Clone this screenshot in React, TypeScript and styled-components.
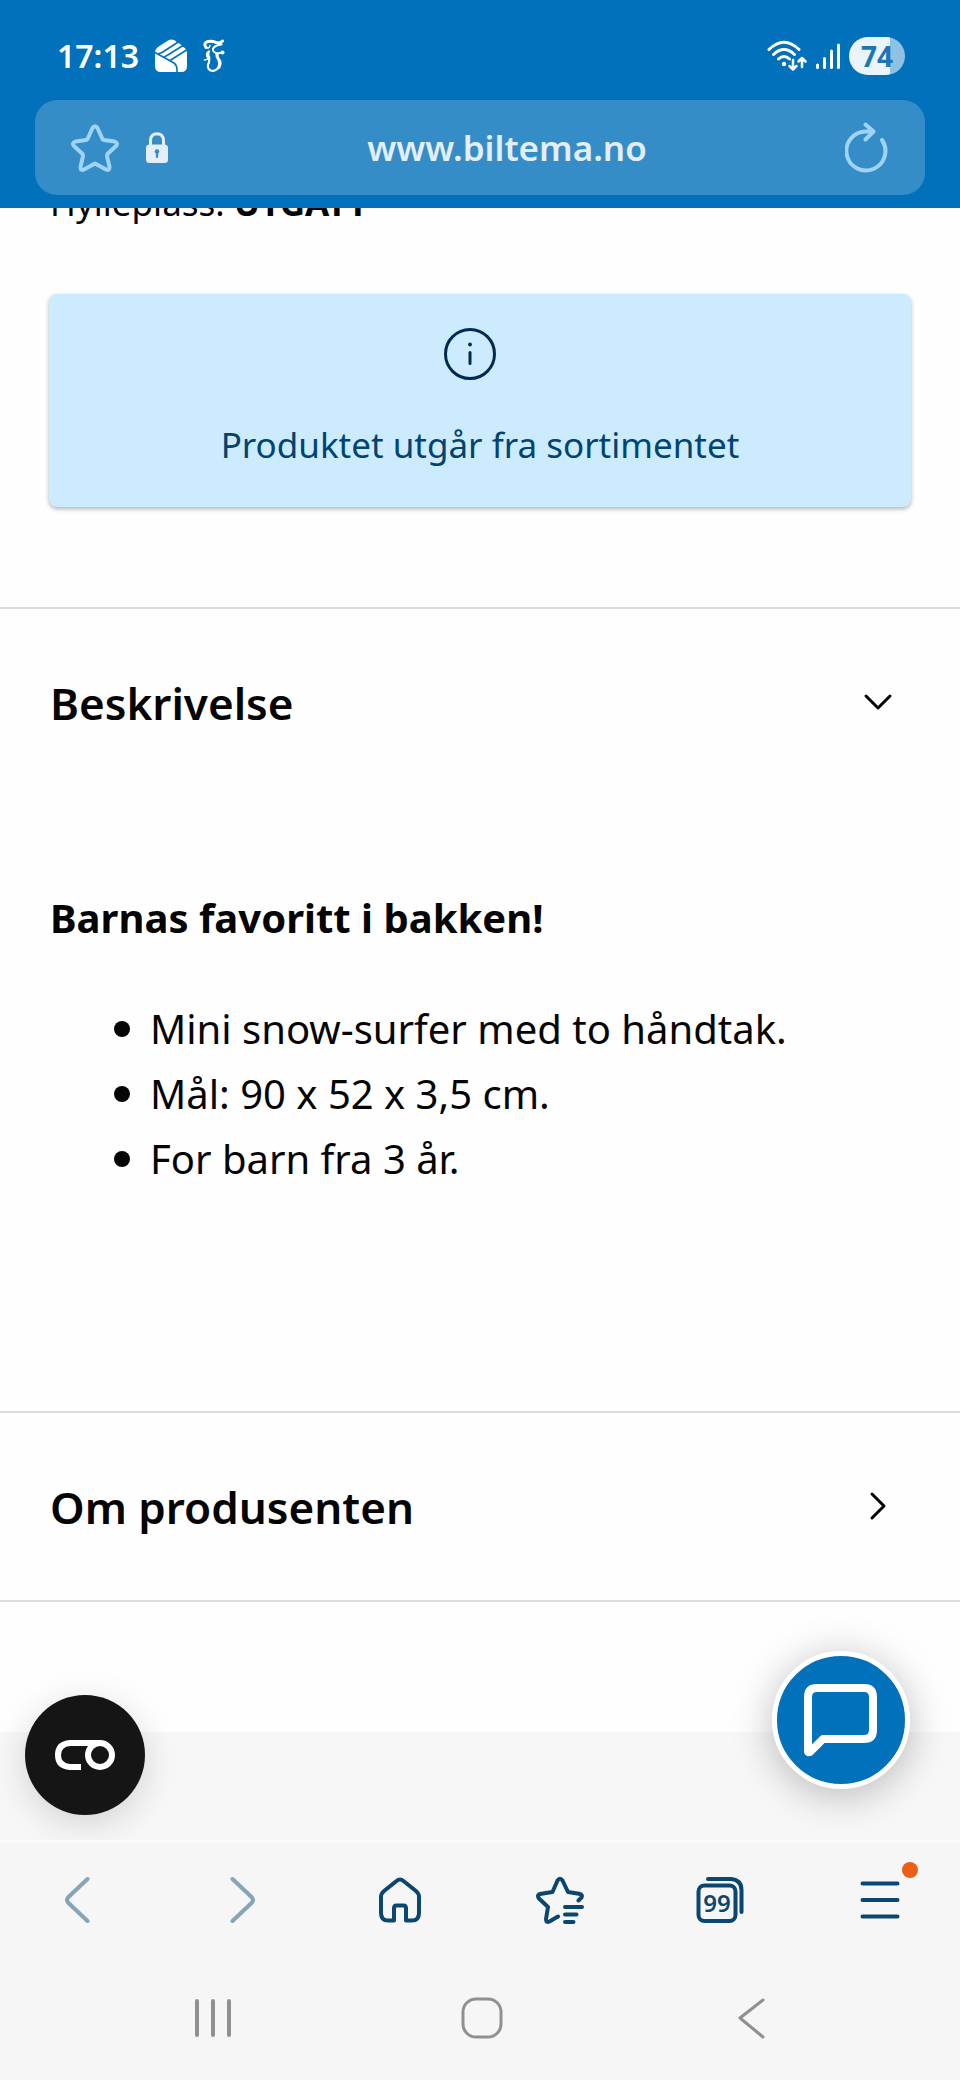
import React, { useState } from "react";
import styled, { createGlobalStyle } from "styled-components";

const color = {
  brand: "#0071ba",
  field: "#358dc7",
  fieldIcon: "#9fd3f7",
  fieldText: "#e3eef8",
  info: "#cdebff",
  infoText: "#00446f",
  nav: "#0b4670",
  navMuted: "#86a4b8",
  system: "#909090",
  line: "#dcdcdc",
};

const GlobalStyle = createGlobalStyle`
  *, *::before, *::after { box-sizing: border-box; }
  html, body { margin: 0; padding: 0; }
  body {
    font-family: "Noto Sans", "Open Sans", sans-serif;
    color: #050505;
    background: #fefefe;
  }
  button { font: inherit; color: inherit; border: 0; padding: 0; background: none; cursor: pointer; }
  svg { display: block; flex: none; }
`;

const Page = styled.div`
  display: flex;
  flex-direction: column;
  min-height: 100vh;
`;

const Header = styled.header`
  position: sticky;
  top: 0;
  z-index: 2;
  padding: 36px 35px 13px;
  background: ${color.brand};
`;

const StatusBar = styled.div`
  display: flex;
  justify-content: space-between;
  height: 40px;
  margin-bottom: 24px;
  padding: 0 20px 0 22px;
  color: #fff;
`;

const StatusGroup = styled.div<{ $gap: number }>`
  display: flex;
  align-items: center;
  gap: ${(p) => p.$gap}px;
`;

const Clock = styled.time`
  font-size: 32px;
  line-height: 40px;
  font-weight: 600;
`;

const Battery = styled.span`
  width: 56px;
  height: 38px;
  border-radius: 19px;
  background: linear-gradient(to right, #ecf4fb 74%, #8fc1e3 74%);
  color: #1a76b6;
  font-size: 28px;
  line-height: 38px;
  font-weight: 700;
  text-align: center;
`;

const AddressBar = styled.div`
  display: flex;
  align-items: center;
  height: 95px;
  padding: 0 36px;
  border-radius: 22px;
  background: ${color.field};
  color: ${color.fieldIcon};
`;

const SiteActions = styled.div`
  display: flex;
  align-items: center;
  gap: 26px;
`;

const Address = styled.a`
  flex: 1;
  color: ${color.fieldText};
  font-size: 35px;
  line-height: 48px;
  font-weight: 600;
  text-align: center;
  text-decoration: none;
`;

const Content = styled.main`
  background: #fefefe;
  padding-bottom: 130px;
`;

const ShelfRow = styled.div`
  display: flex;
  align-items: flex-end;
  height: 20px;
  margin-bottom: 66px;
  padding: 0 50px;
  overflow: hidden;
`;

const Shelf = styled.p`
  margin: 0;
  font-size: 35px;
  line-height: 50px;
`;

const InfoCard = styled.section`
  display: flex;
  flex-direction: column;
  align-items: center;
  gap: 36px;
  height: 213px;
  margin: 0 49px 100px;
  padding-top: 33px;
  border-radius: 8px;
  background: ${color.info};
  color: ${color.infoText};
  box-shadow: 0 2px 4px rgba(0, 0, 0, 0.3);

  svg { margin-right: 20px; }
`;

const InfoText = styled.p`
  margin: 0;
  font-size: 35px;
  line-height: 56px;
`;

const Section = styled.section`
  border-top: 2px solid ${color.line};

  &:last-child { border-bottom: 2px solid ${color.line}; }
`;

const SectionTitle = styled.span`
  font-size: 44px;
  line-height: 60px;
  font-weight: 600;
`;

const SectionHeading = styled.h2`
  margin: 0;
`;

const SectionToggle = styled.button`
  display: flex;
  align-items: center;
  justify-content: space-between;
  width: 100%;
  height: 187px;
  padding: 0 62px 0 50px;
  text-align: left;
`;

const Description = styled.div`
  padding: 92px 50px 220px;
`;

const Lead = styled.p`
  margin: 0 0 48px;
  font-size: 40px;
  line-height: 60px;
  font-weight: 700;
`;

const Facts = styled.ul`
  margin: 0;
  padding: 0 0 0 64px;
  list-style: none;
`;

const Fact = styled.li`
  display: flex;
  align-items: center;
  gap: 20px;
  font-size: 40px;
  line-height: 65px;

  &::before {
    content: "";
    width: 16px;
    height: 16px;
    border-radius: 50%;
    background: #050505;
  }
`;

const Footer = styled.footer`
  flex: 1;
  min-height: 108px;
  background: #f7f7f7;
`;

const Floating = styled.div`
  position: fixed;
  z-index: 1;
  right: 50px;
  bottom: 265px;
  left: 25px;
  display: flex;
  align-items: flex-end;
  justify-content: space-between;
  pointer-events: none;
`;

const FloatingButton = styled.button`
  display: flex;
  align-items: center;
  justify-content: center;
  border-radius: 50%;
  color: #fff;
  pointer-events: auto;
`;

const ConsentButton = styled(FloatingButton)`
  width: 120px;
  height: 120px;
  background: #151515;
  box-shadow: 0 8px 36px rgba(0, 0, 0, 0.15);
`;

const ChatButton = styled(FloatingButton)`
  width: 138px;
  height: 138px;
  margin-bottom: 26px;
  border: 5px solid #fff;
  background: ${color.brand};
  box-shadow: 0 6px 40px rgba(0, 0, 0, 0.26);
`;

const BottomBars = styled.div`
  position: sticky;
  bottom: 0;
  z-index: 2;
  height: 240px;
  border-top: 3px solid #fafafa;
  background: #f6f6f6;
`;

const BrowserNav = styled.nav`
  display: grid;
  grid-template-columns: repeat(6, 1fr);
  height: 114px;
  color: ${color.nav};
`;

const SystemNav = styled.nav`
  display: grid;
  grid-template-columns: repeat(3, 1fr);
  height: 122px;
  padding: 0 74px 0 78px;
  color: ${color.system};
`;

const BarButton = styled.button<{ $muted?: boolean }>`
  position: relative;
  display: flex;
  align-items: center;
  justify-content: center;
  color: ${(p) => (p.$muted ? color.navMuted : "inherit")};
`;

const NewDot = styled.span`
  position: absolute;
  top: 19px;
  right: 42px;
  width: 16px;
  height: 16px;
  border-radius: 50%;
  background: #ea5f16;
`;

const TabCount = styled.span`
  position: absolute;
  inset: 0;
  display: flex;
  align-items: center;
  justify-content: center;
  padding: 5px 6px 0 0;
  font-size: 24px;
  font-weight: 600;
`;

type IconProps = {
  w: number;
  h: number;
  stroke?: number;
  children: React.ReactNode;
};

const Icon = ({ w, h, stroke = 3, children }: IconProps) => (
  <svg
    width={w}
    height={h}
    viewBox={`0 0 ${w} ${h}`}
    fill="none"
    stroke="currentColor"
    strokeWidth={stroke}
    strokeLinecap="round"
    strokeLinejoin="round"
    aria-hidden="true"
  >
    {children}
  </svg>
);

const EnvelopeIcon = () => (
  <Icon w={32} h={34}>
    <path
      fill="currentColor"
      stroke="none"
      d="M0 14Q0 10 3 8L13 1.500Q16 0 19 1Q21.500 2 22 4Q26 4 27 7.500Q32 9 32 14V27Q32 33 26 33H6Q0 33 0 27Z"
    />
    <g stroke={color.brand} strokeWidth="1.600" strokeLinecap="butt">
      <path d="M3 15L7 13.500L22.500 3.500" />
      <path d="M9 18L12 16.500L28 6.500" />
      <path d="M15 21.500L32.500 10.500" />
      <path d="M0 13.500L19 24Q22.500 26.500 22 33.500" />
    </g>
  </Icon>
);

const FrakturIcon = () => (
  <Icon w={22} h={34}>
    <path d="M3 8.500Q0 4 5 2.500Q9 1.500 13 3.500Q17 5 19.500 2" strokeWidth="3" />
    <path d="M3 8.500Q6.500 10 7 6.500" strokeWidth="1.500" />
    <path d="M18.500 5.500Q11 6.500 10 10Q9.500 13 14 14.500L19 13.500" strokeWidth="2" />
    <path d="M6 12.500Q2.500 15 5 18.500Q7.500 21 5 25.500Q4 31 9.500 32Q14 31.500 16.500 27" strokeWidth="2.200" />
    <path d="M14 15Q13.500 18 16 21Q18 24 16 28" strokeWidth="3.200" />
    <path d="M5 14.500Q4.500 16.500 6 19" strokeWidth="3" />
    <path d="M1.500 21L5 20" strokeWidth="1.500" />
    <circle cx="19.500" cy="13.500" r="2" fill="currentColor" stroke="none" />
  </Icon>
);

const WifiIcon = () => (
  <Icon w={40} h={32} stroke={3}>
    <path d="M2 9.500Q17-5 32 9.500M6.500 14.500Q17 4.500 27.500 14.500M11.500 19Q17 14 22.500 19" />
    <circle cx="17" cy="24" r="2.200" fill="currentColor" stroke="none" />
    <path d="M26 20V29M22.500 26L26 29.500L29.500 26M35 27V18.500M31.500 21.500L35 18L38.500 21.500" strokeWidth="2.500" />
  </Icon>
);

const SignalIcon = () => (
  <Icon w={26} h={30} stroke={3}>
    <path d="M2.500 24V26.500M9.500 17.500V26.500M16.500 10V26.500M23.500 4V26.500" />
  </Icon>
);

const StarIcon = () => (
  <Icon w={48} h={48} stroke={4}>
    <path d="M21.500 4Q24 0.500 26.500 4L31 14Q31.500 15.500 33 16L43.500 17.500Q47.500 19 45 22L36.500 30Q36 31 36 32L38.500 43Q38.500 47 35 45.500L24 39.500L13 45.500Q9.500 47 9.500 43L12 32Q12 31 11.500 30L3 22Q0.500 19 4.500 17.500L15 16Q16.500 15.500 17 14Z" />
  </Icon>
);

const LockIcon = () => (
  <Icon w={24} h={32} stroke={3}>
    <g color={color.fieldText}>
      <path d="M5.500 14V8Q6 2 12 1.800Q18 2 18.500 8V14" stroke="currentColor" />
      <rect x="1" y="12.500" width="22" height="18.500" rx="3.500" fill="currentColor" stroke="none" />
    </g>
    <circle cx="12" cy="19.500" r="2.300" fill={color.field} stroke="none" />
    <path d="M12 19.500V25" stroke={color.field} strokeWidth="2.200" />
  </Icon>
);

const ReloadIcon = () => (
  <Icon w={44} h={52} stroke={4}>
    <path d="M37 18A19.500 19.500 0 1 1 21 9.500H28M20.500 2.500L28.500 9.500L20.500 17.500" />
  </Icon>
);

const InfoIcon = () => (
  <Icon w={54} h={54} stroke={3}>
    <circle cx="27" cy="27" r="24.500" stroke="#002b4c" />
    <path d="M27 25.500V36.500" stroke="#002b4c" />
    <circle cx="27" cy="17.500" r="1.900" fill="#002b4c" stroke="none" />
  </Icon>
);

const ChevronDown = () => (
  <Icon w={40} h={40}>
    <path d="M8 13L20 25L32 13" />
  </Icon>
);

const ChevronRight = () => (
  <Icon w={40} h={40}>
    <path d="M14 7L26 19L14 31" />
  </Icon>
);

const ConsentIcon = () => (
  <Icon w={62} h={32} stroke={6}>
    <path d="M27 28H16Q4 27 4 16Q4 5 16 4H46" strokeLinecap="butt" />
    <circle cx="46" cy="16" r="12" />
  </Icon>
);

const ChatIcon = () => (
  <Icon w={76} h={76} stroke={8}>
    <path d="M5 69V15Q5 6 14 6H61Q70 6 70 15V48Q70 57 61 57H20L7 70Q5 71 5 69Z" />
  </Icon>
);

const BackIcon = () => (
  <Icon w={32} h={48} stroke={4}>
    <path d="M23.500 3L4 21.500Q2 24 4 26.500L23.500 45" />
  </Icon>
);

const ForwardIcon = () => (
  <Icon w={32} h={48} stroke={4}>
    <path d="M8.500 3L28 21.500Q30 24 28 26.500L8.500 45" />
  </Icon>
);

const HomeIcon = () => (
  <Icon w={44} h={46} stroke={4}>
    <path d="M18.500 4Q22 1 25.500 4L38 14Q41 16.500 41 20V36Q41 43.500 34 43.500H28V31.500Q28 28.500 25.500 28.500H18.500Q16 28.500 16 31.500V43.500H10Q3 43.500 3 36V20Q3 16.500 6 14Z" />
  </Icon>
);

const BookmarksIcon = () => (
  <Icon w={50} h={48} stroke={4}>
    <path d="M43.500 24.500L46.500 21.500Q48 18.500 44 17.800L33 16L27.500 4.500Q25 1 22.500 4.500L17.500 16L5 18Q1.500 19 4 22.500L13 31L11 43Q11 47 14.500 45.500L23 40.500" />
    <path d="M30 31H47M30 38.500H41.500M30 46H38.500" />
  </Icon>
);

const TabsIcon = () => (
  <Icon w={50} h={48} stroke={4}>
    <rect x="3.500" y="9.500" width="37" height="35.500" rx="6" />
    <path d="M13 3H36Q46.500 4 46.500 14V36" />
  </Icon>
);

const MenuIcon = () => (
  <Icon w={40} h={40} stroke={4}>
    <path d="M2.500 3.500H37.500M2.500 20H37.500M2.500 36.500H37.500" />
  </Icon>
);

const RecentsIcon = () => (
  <Icon w={38} h={38} stroke={4}>
    <path d="M3 2V36M19 2V36M35 2V36" />
  </Icon>
);

const SystemHomeIcon = () => (
  <Icon w={42} h={42}>
    <rect x="2" y="2" width="38" height="38" rx="13" />
  </Icon>
);

const SystemBackIcon = () => (
  <Icon w={28} h={42}>
    <path d="M26 3L3 21L26 40" />
  </Icon>
);

type AccordionProps = {
  title: string;
  initiallyOpen?: boolean;
  children?: React.ReactNode;
};

const Accordion = ({ title, initiallyOpen = false, children }: AccordionProps) => {
  const [open, setOpen] = useState(initiallyOpen);
  return (
    <Section>
      <SectionHeading>
        <SectionToggle aria-expanded={open} onClick={() => setOpen(!open)}>
          <SectionTitle>{title}</SectionTitle>
          {open ? <ChevronDown /> : <ChevronRight />}
        </SectionToggle>
      </SectionHeading>
      {open && children}
    </Section>
  );
};

const facts = ["Mini snow-surfer med to håndtak.", "Mål: 90 x 52 x 3,5 cm.", "For barn fra 3 år."];

export default function App() {
  return (
    <Page>
      <GlobalStyle />
      <Header>
        <StatusBar>
          <StatusGroup $gap={16}>
            <Clock>17:13</Clock>
            <EnvelopeIcon />
            <FrakturIcon />
          </StatusGroup>
          <StatusGroup $gap={8}>
            <WifiIcon />
            <SignalIcon />
            <Battery>74</Battery>
          </StatusGroup>
        </StatusBar>
        <AddressBar>
          <SiteActions>
            <button aria-label="Bokmerk"><StarIcon /></button>
            <LockIcon />
          </SiteActions>
          <Address href="#">www.biltema.no</Address>
          <button aria-label="Last inn på nytt"><ReloadIcon /></button>
        </AddressBar>
      </Header>

      <Content>
        <ShelfRow>
          <Shelf>Hylleplass: <b>UTGÅTT</b></Shelf>
        </ShelfRow>
        <InfoCard>
          <InfoIcon />
          <InfoText>Produktet utgår fra sortimentet</InfoText>
        </InfoCard>
        <div>
          <Accordion title="Beskrivelse" initiallyOpen>
            <Description>
              <Lead>Barnas favoritt i bakken!</Lead>
              <Facts>
                {facts.map((fact) => (
                  <Fact key={fact}>{fact}</Fact>
                ))}
              </Facts>
            </Description>
          </Accordion>
          <Accordion title="Om produsenten" />
        </div>
      </Content>
      <Footer />

      <Floating>
        <ConsentButton aria-label="Samtykke"><ConsentIcon /></ConsentButton>
        <ChatButton aria-label="Chat"><ChatIcon /></ChatButton>
      </Floating>

      <BottomBars>
        <BrowserNav aria-label="Nettleser">
          <BarButton $muted aria-label="Tilbake"><BackIcon /></BarButton>
          <BarButton $muted aria-label="Frem"><ForwardIcon /></BarButton>
          <BarButton aria-label="Hjem"><HomeIcon /></BarButton>
          <BarButton aria-label="Bokmerker"><BookmarksIcon /></BarButton>
          <BarButton aria-label="Faner">
            <TabsIcon />
            <TabCount>99</TabCount>
          </BarButton>
          <BarButton aria-label="Meny">
            <MenuIcon />
            <NewDot />
          </BarButton>
        </BrowserNav>
        <SystemNav aria-label="System">
          <BarButton aria-label="Nylige apper"><RecentsIcon /></BarButton>
          <BarButton aria-label="Startskjerm"><SystemHomeIcon /></BarButton>
          <BarButton aria-label="Gå tilbake"><SystemBackIcon /></BarButton>
        </SystemNav>
      </BottomBars>
    </Page>
  );
}
